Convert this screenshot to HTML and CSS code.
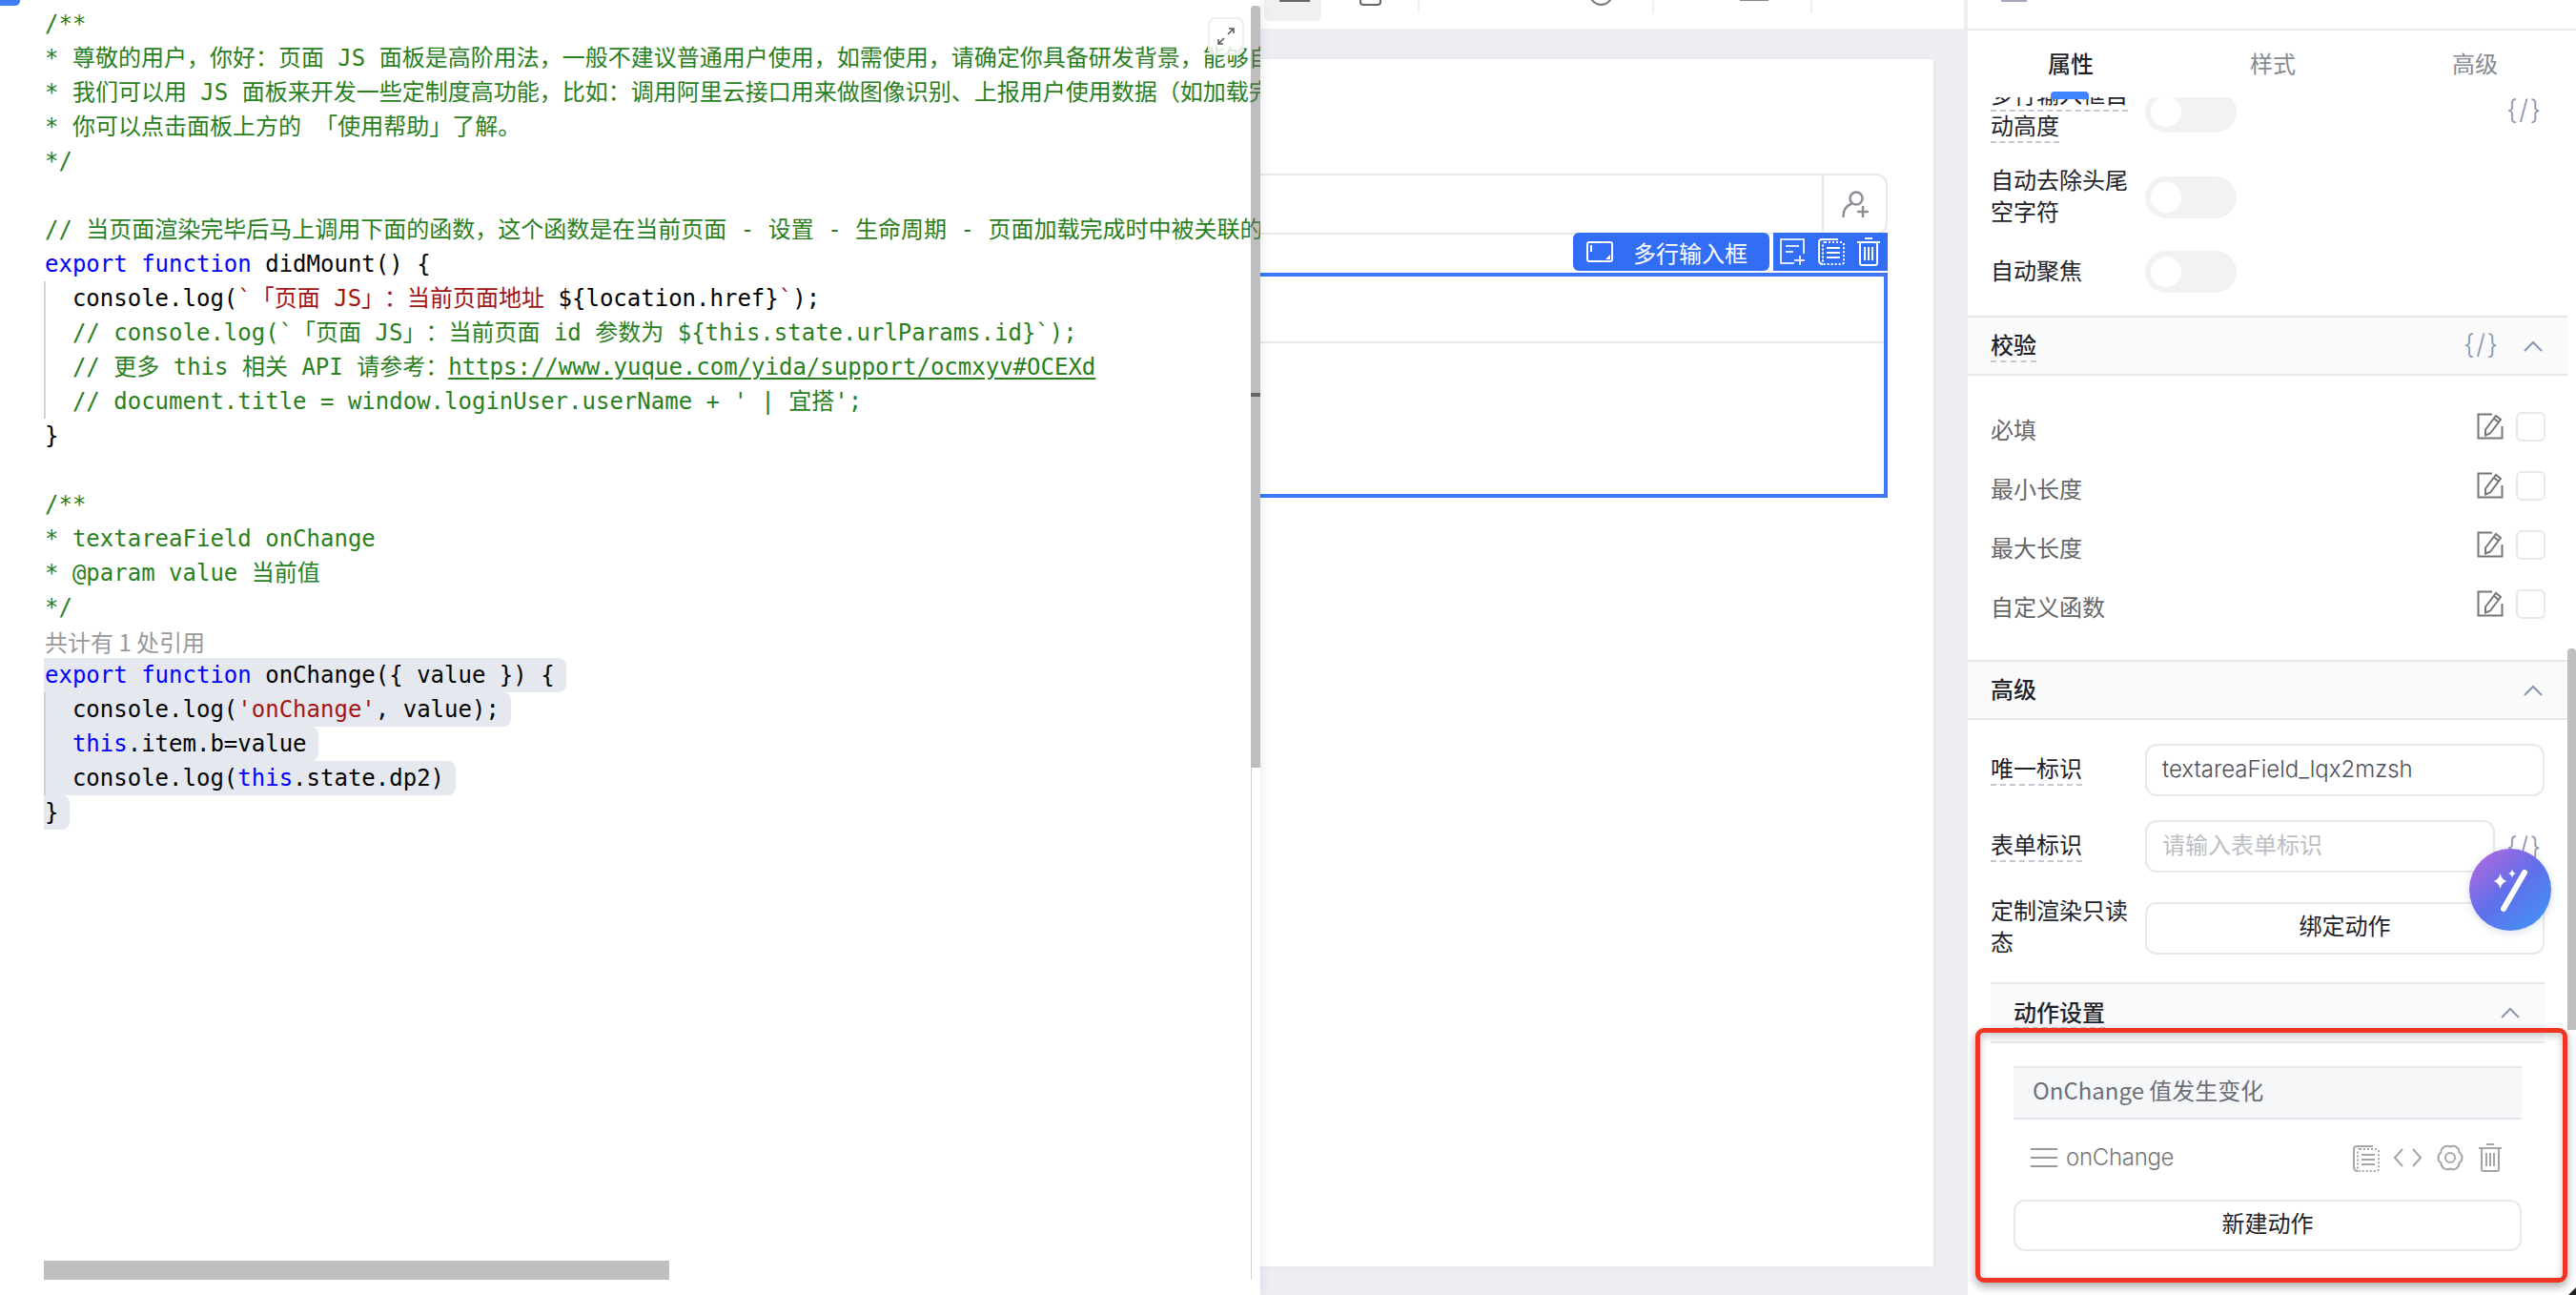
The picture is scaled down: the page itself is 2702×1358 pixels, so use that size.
FILE: index.html
```html
<!DOCTYPE html>
<html lang="zh-CN">
<head>
<meta charset="utf-8">
<title>页面 JS</title>
<link rel="stylesheet" href="styles.css">
</head>
<body>
<div class="app">
  <div class="center">
    <div class="topbar">
      <div class="top-tab"><span class="top-tab-mark"></span></div>
      <span class="top-icon"></span>
      <span class="top-sep top-sep-a"></span>
      <span class="top-ring"></span>
      <span class="top-sep top-sep-b"></span>
      <span class="top-line"></span>
      <span class="top-sep top-sep-c"></span>
    </div>
    <div class="canvas">
      <div class="card">
        <div class="user-field">
          <div class="user-main"></div>
          <div class="user-btn">
            <svg width="28" height="28" viewBox="0 0 28 28" fill="none" stroke="#8b8f96" stroke-width="2.500" stroke-linecap="round"><circle cx="15" cy="8" r="6.500"/><path d="M1.500 27c0-7 3-11 8-13"/><path d="M17 22h10M22 17v10"/></svg>
          </div>
        </div>
        <div class="selected">
          <div class="sel-head"></div>
          <div class="sel-body"></div>
          <div class="sel-tools">
            <div class="sel-label">
              <svg width="28" height="22" viewBox="0 0 28 22" fill="none" stroke="#fff" stroke-width="2"><rect x="1" y="1" width="26" height="20" rx="2"/><path d="M5 4v7"/><path d="M25 14v5h-5z" fill="#fff" stroke="none"/></svg>
              <span>多行输入框</span>
            </div>
            <div class="sel-actions">
              <svg width="28" height="30" viewBox="0 0 28 30" fill="none" stroke="#dfe8ff" stroke-width="2"><path d="M16 27H2V2h24v15"/><path d="M7 9h14M7 15h8M22 19v10M16 24h11"/></svg>
              <svg width="28" height="30" viewBox="0 0 28 30" fill="none" stroke="#fff" stroke-width="2"><path d="M5 28c-3 0-4-1-4-4V5c0-2 1-3 3-3h17"/><rect x="5" y="5" width="22" height="23" rx="2" stroke-dasharray="2 2"/><path d="M9 11h14M9 16h14M9 21h14"/></svg>
              <svg width="24" height="30" viewBox="0 0 24 30" fill="none" stroke="#fff" stroke-width="2"><path d="M0 5h24M8 1h8"/><rect x="3" y="5" width="18" height="24" rx="2"/><path d="M8 10v14M12 10v14M16 10v14"/></svg>
            </div>
          </div>
        </div>
      </div>
    </div>
  </div>

  <aside class="panel">
    <div class="crumbs">
      <span class="crumb-icon"></span>
      <span class="crumb">页面内容</span><span class="crumb-sep">/</span>
      <span class="crumb">容器</span><span class="crumb-sep">/</span>
      <span class="crumb">多行输入框</span>
    </div>
    <div class="tabs">
      <div class="tab tab-active">属性<span class="tab-bar"></span></div>
      <div class="tab">样式</div>
      <div class="tab">高级</div>
    </div>
    <div class="scroll">
      <div class="props">
        <div class="prop-row">
          <div class="label"><span class="dashed">多行输入框自动高度</span></div>
          <span class="toggle"><span class="knob"></span></span>
          <span class="bind bind-end">{/}</span>
        </div>
        <div class="prop-row">
          <div class="label">自动去除头尾空字符</div>
          <span class="toggle"><span class="knob"></span></span>
        </div>
        <div class="prop-row">
          <div class="label">自动聚焦</div>
          <span class="toggle"><span class="knob"></span></span>
        </div>
      </div>

      <div class="sec-head">
        <span class="sec-title dashed">校验</span>
        <span class="bind bind-head">{/}</span>
        <svg class="chev" width="20" height="12" viewBox="0 0 20 12" fill="none" stroke="#8a96b0" stroke-width="2"><path d="M1 11l9-9 9 9"/></svg>
      </div>
      <div class="checks">
        <div class="check-row"><span class="check-name">必填</span><svg class="edit" width="28" height="28" viewBox="0 0 28 28" fill="none" stroke="#777" stroke-width="2"><path d="M16 1.500H1.500v25h25V14"/><path d="M9 17.500L20 3l5 4-11 14.500-5 2z"/><path d="M18 6l5 4"/></svg><span class="checkbox"></span></div>
        <div class="check-row"><span class="check-name">最小长度</span><svg class="edit" width="28" height="28" viewBox="0 0 28 28" fill="none" stroke="#777" stroke-width="2"><path d="M16 1.500H1.500v25h25V14"/><path d="M9 17.500L20 3l5 4-11 14.500-5 2z"/><path d="M18 6l5 4"/></svg><span class="checkbox"></span></div>
        <div class="check-row"><span class="check-name">最大长度</span><svg class="edit" width="28" height="28" viewBox="0 0 28 28" fill="none" stroke="#777" stroke-width="2"><path d="M16 1.500H1.500v25h25V14"/><path d="M9 17.500L20 3l5 4-11 14.500-5 2z"/><path d="M18 6l5 4"/></svg><span class="checkbox"></span></div>
        <div class="check-row"><span class="check-name">自定义函数</span><svg class="edit" width="28" height="28" viewBox="0 0 28 28" fill="none" stroke="#777" stroke-width="2"><path d="M16 1.500H1.500v25h25V14"/><path d="M9 17.500L20 3l5 4-11 14.500-5 2z"/><path d="M18 6l5 4"/></svg><span class="checkbox"></span></div>
      </div>

      <div class="sec-head">
        <span class="sec-title">高级</span>
        <svg class="chev" width="20" height="12" viewBox="0 0 20 12" fill="none" stroke="#8a96b0" stroke-width="2"><path d="M1 11l9-9 9 9"/></svg>
      </div>
      <div class="adv">
        <div class="adv-row">
          <div class="label"><span class="dashed">唯一标识</span></div>
          <div class="input input-value">textareaField_lqx2mzsh</div>
        </div>
        <div class="adv-row">
          <div class="label"><span class="dashed">表单标识</span></div>
          <div class="input input-holder">请输入表单标识</div>
          <span class="bind bind-side">{/}</span>
        </div>
        <div class="adv-row">
          <div class="label">定制渲染只读态</div>
          <div class="input btn-like">绑定动作</div>
        </div>
      </div>

      <div class="sub-sec">
        <div class="sub-head">
          <span class="sec-title dashed">动作设置</span>
          <svg class="chev" width="20" height="12" viewBox="0 0 20 12" fill="none" stroke="#8a96b0" stroke-width="2"><path d="M1 11l9-9 9 9"/></svg>
        </div>
        <div class="sub-body">
          <div class="event-head">OnChange 值发生变化</div>
          <div class="event-row">
            <svg class="event-menu" width="28" height="20" viewBox="0 0 28 20" fill="none" stroke="#999" stroke-width="2"><path d="M0 1h28M0 10h28M0 19h28"/></svg>
            <span class="event-name">onChange</span>
            <span class="event-tools">
              <svg width="28" height="29" viewBox="0 0 28 29" fill="none" stroke="#a6a6a6" stroke-width="2"><path d="M5 28c-3 0-4-1-4-4V5c0-2 1-3 3-3h17"/><rect x="5" y="5" width="22" height="23" rx="2" stroke-dasharray="2 2"/><path d="M9 11h14M9 16h14M9 21h14"/></svg>
              <svg width="29" height="24" viewBox="0 0 29 24" fill="none" stroke="#a6a6a6" stroke-width="2"><path d="M9 3l-8 9 8 9M20 3l8 9-8 9"/></svg>
              <svg width="30" height="30" viewBox="0 0 30 30" fill="none" stroke="#a6a6a6" stroke-width="2" stroke-linejoin="round"><path d="M15 3.500A6.500 6.500 0 0 1 24.500 9.500A6.500 6.500 0 0 1 24.500 20.500A6.500 6.500 0 0 1 15 26.500A6.500 6.500 0 0 1 5.500 20.500A6.500 6.500 0 0 1 5.500 9.500A6.500 6.500 0 0 1 15 3.500Z"/><circle cx="15" cy="15" r="5"/></svg>
              <svg width="24" height="30" viewBox="0 0 24 30" fill="none" stroke="#a6a6a6" stroke-width="2"><path d="M0 5h24M8 1h8"/><rect x="3" y="5" width="18" height="24" rx="2"/><path d="M8 10v14M12 10v14M16 10v14"/></svg>
            </span>
          </div>
          <div class="new-action">新建动作</div>
        </div>
      </div>
      <span class="scroll-thumb"></span>
    </div>
    <div class="fab">
      <svg width="86" height="86" viewBox="0 0 86 86" fill="#fff"><path d="M58 25L36 63" stroke="#fff" stroke-width="6" stroke-linecap="round"/><path d="M32.500 26q1.500 6.500 7 8-5.500 1.500-7 8-1.500-6.500-7-8 5.500-1.500 7-8z"/><path d="M45 21.500q.8 3.700 4 4.500-3.200.8-4 4.500-.8-3.700-4-4.500 3.200-.8 4-4.500z"/></svg>
    </div>
    <div class="annotation"></div>
    <span class="corner"></span>
  </aside>

  <section class="code-panel">
    <span class="corner-tab"></span>
    <div class="code">
      <div class="line c">/**</div>
      <div class="line c">* 尊敬的用户，你好：页面 JS 面板是高阶用法，一般不建议普通用户使用，如需使用，请确定你具备研发背景，能够自主排查问题</div>
      <div class="line c">* 我们可以用 JS 面板来开发一些定制度高功能，比如：调用阿里云接口用来做图像识别、上报用户使用数据（如加载完成打点）等等</div>
      <div class="line c">* 你可以点击面板上方的 「使用帮助」了解。</div>
      <div class="line c">*/</div>
      <div class="line"></div>
      <div class="line c">// 当页面渲染完毕后马上调用下面的函数，这个函数是在当前页面 - 设置 - 生命周期 - 页面加载完成时中被关联的。</div>
      <div class="line"><span class="k">export function</span> didMount() {</div>
      <div class="line guide">  console.log(<span class="s">`「页面 JS」：当前页面地址 </span>${location.href}<span class="s">`</span>);</div>
      <div class="line guide c">  // console.log(`「页面 JS」：当前页面 id 参数为 ${this.state.urlParams.id}`);</div>
      <div class="line guide c">  // 更多 this 相关 API 请参考：<span class="link">https://www.yuque.com/yida/support/ocmxyv#OCEXd</span></div>
      <div class="line guide c">  // document.title = window.loginUser.userName + ' | 宜搭';</div>
      <div class="line">}</div>
      <div class="line"></div>
      <div class="line c">/**</div>
      <div class="line c">* textareaField onChange</div>
      <div class="line c">* @param value 当前值</div>
      <div class="line c">*/</div>
      <div class="lens">共计有 1 处引用</div>
      <div class="line-hl"><span class="hl"><span class="k">export function</span> onChange({ value }) {</span></div>
      <div class="line-hl"><span class="hl hl-guide">  console.log(<span class="s">'onChange'</span>, value);</span></div>
      <div class="line-hl"><span class="hl hl-guide">  <span class="k">this</span>.item.b=value</span></div>
      <div class="line-hl"><span class="hl hl-guide">  console.log(<span class="k">this</span>.state.dp2)</span></div>
      <div class="line-hl"><span class="hl">}</span></div>
    </div>
    <button class="expand" type="button" aria-label="展开">
      <svg width="20" height="20" viewBox="0 0 20 20" fill="none" stroke="#555" stroke-width="1.500"><path d="M12 8l6-6M13 2h5v5M8 12l-6 6M2 13v5h5"/></svg>
    </button>
    <span class="vbar-line"></span>
    <span class="vbar"></span>
    <span class="vbar-mark"></span>
    <span class="hbar"></span>
  </section>
</div>
</body>
</html>
```
FILE: styles.css
```css
* { box-sizing: border-box; }
html, body { margin: 0; padding: 0; }
body {
  width: 2702px;
  height: 1358px;
  overflow: hidden;
  background: #eceef2;
  font-family: "Noto Sans CJK SC", "Inter", sans-serif;
  font-size: 24px;
  color: #1f2329;
}
.app { position: relative; display: flex; gap: 4px; width: 2702px; height: 1358px; }

/* centre column */
.center { width: 2060px; display: flex; flex-direction: column; }
.topbar { position: relative; height: 30px; background: #fff; flex: none; overflow: hidden; }
.top-tab { position: absolute; left: 1326px; top: 0; width: 60px; height: 22px; background: #eff0f2; border-radius: 0 0 6px 6px; }
.top-tab-mark { display: block; width: 32px; height: 2px; margin-left: 16px; background: #666; }
.top-icon { position: absolute; left: 1426px; top: -10px; width: 23px; height: 16px; border: 2px solid #666; border-radius: 4px; }
.top-ring { position: absolute; left: 1667px; top: -19px; width: 25px; height: 25px; border: 2px solid #777; border-radius: 50%; }
.top-line { position: absolute; left: 1825px; top: 0; width: 30px; height: 1px; background: #888; }
.top-sep { position: absolute; top: 0; width: 2px; height: 14px; background: #eeeff2; }
.top-sep-a { left: 1487px; }
.top-sep-b { left: 1733px; }
.top-sep-c { left: 1899px; }

.canvas { flex: 1; padding: 32px 32px 30px 1200px; min-height: 0; }
.card { height: 100%; background: #fff; padding: 120px 48px 0; box-shadow: 0 0 4px rgba(40, 50, 80, .06); }
.user-field { display: flex; height: 64px; border: 2px solid #e8e8e8; border-radius: 0 12px 12px 0; }
.user-main { flex: 1; }
.user-btn { width: 67px; display: flex; align-items: center; justify-content: center; border-left: 2px solid #e8e8e8; }

.selected { position: relative; margin-top: 40px; height: 236px; border: 4px solid #3f76f5; }
.sel-head { height: 70px; border-bottom: 2px solid #e8e8e8; }
.sel-tools { position: absolute; top: -46px; right: -4px; display: flex; gap: 4px; height: 40px; color: #fff; }
.sel-label { width: 206px; display: flex; align-items: center; gap: 21px; padding-left: 14px; background: #316df5; border-radius: 6px; }
.sel-actions { width: 120px; display: flex; align-items: center; gap: 13px; padding-left: 6px; background: #316df5; }

/* right panel */
.panel { position: relative; width: 638px; height: 1358px; background: #fff; display: flex; flex-direction: column; overflow: hidden; }
.crumbs { height: 32px; flex: none; display: flex; align-items: flex-start; padding-left: 35px; border-bottom: 2px solid #e9e9ee; overflow: hidden; color: #555; line-height: 34px; }
.crumb-icon { width: 27px; height: 2px; background: #a5a9bb; margin-right: 13px; }
.crumb { margin-top: -32px; }
.crumb-sep { margin: -32px 26px 0; color: #aaa; }
.tabs { position: relative; z-index: 2; height: 70px; flex: none; display: grid; grid-template-columns: repeat(3, 1fr); padding-left: 2px; background: #fff; }
.tab { position: relative; text-align: center; line-height: 68px; color: #878a90; }
.tab-active { color: #1f2329; font-weight: 500; }
.tab-bar { position: absolute; left: 85px; top: 64px; width: 40px; height: 8px; background: #3f85ff; border-radius: 4px 4px 0 0; }

.scroll { position: relative; flex: 1; min-height: 0; overflow: hidden; padding-right: 9px; }
.scroll-thumb { position: absolute; right: 0; top: 578px; width: 9px; height: 400px; background: #bfbfbf; border-radius: 4px 4px 0 0; }

.props { display: flex; flex-direction: column; gap: 23.5px; margin-top: -18px; padding: 0 24px 24px; }
.prop-row { display: flex; align-items: center; min-height: 44px; }
.label { width: 144px; margin: -3px 18px 3px 0; flex: none; line-height: 33px; }
.dashed { text-decoration: underline dashed #c4c8d4 2px; text-underline-offset: 7px; }
.toggle { display: flex; align-items: center; width: 96px; height: 44px; padding-left: 6px; background: #f1f2f4; border-radius: 22px; }
.knob { width: 32px; height: 32px; background: #fff; border-radius: 50%; }
.bind { width: 35px; flex: none; color: #8a96b0; font-family: "Inter", sans-serif; font-weight: 300; font-size: 28px; letter-spacing: 1.5px; line-height: 28px; white-space: nowrap; }
.bind-end { margin: -2px 5px 2px auto; }
.bind-side { margin-left: 12px; margin-right: 5px; }
.bind-head { margin: -2px 28px 2px auto; }

.sec-head { display: flex; align-items: center; height: 63px; padding: 0 26px 0 24px; background: #fafafb; border-top: 2px solid #e6e7ec; border-bottom: 2px solid #e6e7ec; }
.sec-title { margin: -2px 0 2px; font-weight: 500; color: #1f2329; }
.sec-head .sec-title + .chev { margin-left: auto; }
.checks { padding: 25px 23px 25px 24px; }
.check-row { display: flex; align-items: center; height: 62px; color: #666; }
.check-name { flex: 1; margin: -1px 0 1px; }
.edit { margin-bottom: 6px; }
.checkbox { width: 31px; height: 31px; margin: 0 0 6px 13px; border: 2px solid #e6e8ee; border-radius: 6px; }

.adv { display: flex; flex-direction: column; gap: 25px; padding: 25px 24px 0; }
.adv-row { display: flex; align-items: center; }
.input { flex: 1; height: 55px; line-height: 46px; padding-left: 16px; border: 2px solid #e8e8e8; border-radius: 12px; }
.input-value { line-height: 50px; color: #4f525a; font-family: "Inter", "Noto Sans CJK SC", sans-serif; font-weight: 300; }
.input-holder { color: #bcbec4; }
.btn-like { padding-left: 0; line-height: 44px; text-align: center; color: #1f2329; }

.sub-sec { margin: 24px 24px 0; }
.sub-head { display: flex; align-items: center; justify-content: space-between; height: 64px; padding: 0 26px 0 24px; background: #fafafb; border-top: 2px solid #e6e7ec; border-bottom: 2px solid #e6e7ec; }
.sub-body { padding: 24px 24px 0; }
.event-head { height: 56px; line-height: 46px; padding-left: 20px; color: #6b6e75; background: #f6f7f9; border-top: 2px solid #e6e7ec; border-bottom: 2px solid #e6e7ec; }
.event-row { display: flex; align-items: center; height: 84px; padding: 0 21px 4px 18px; }
.event-menu { margin-right: 9px; }
.event-name { margin-bottom: 2px; color: #777; font-family: "Inter", sans-serif; font-weight: 300; letter-spacing: -.3px; }
.event-tools { display: flex; align-items: center; gap: 15px; margin-left: auto; }
.new-action { height: 54px; line-height: 44px; text-align: center; border: 2px solid #e8e8e8; border-radius: 12px; }

.fab { position: absolute; left: 526px; top: 890px; width: 86px; height: 86px; border-radius: 50%; background: linear-gradient(140deg, #bd66dd 0%, #5f70ea 50%, #3f98f6 100%); box-shadow: 0 2px 8px rgba(60, 80, 160, .2); }
.annotation { position: absolute; left: 8px; top: 1078px; width: 621px; height: 267px; border: 5px solid #ee3524; border-radius: 9px; box-shadow: 0 4px 10px rgba(0, 0, 0, .35), inset 0 3px 8px rgba(0, 0, 0, .22); }
.corner { position: absolute; right: 0; bottom: 0; width: 8px; height: 8px; background: #222; clip-path: polygon(100% 0, 100% 100%, 0 100%); }

/* code panel */
.code-panel { position: absolute; left: 0; top: 0; width: 1322px; height: 1358px; background: #fff; overflow: hidden; box-shadow: 0 0 10px rgba(40, 50, 90, .12); }
.corner-tab { position: absolute; left: 0; top: 0; width: 21px; height: 6px; background: #3f7ff5; border-radius: 0 0 5px 0; }
.code { padding: 7px 0 0 46px; font-family: "DejaVu Sans Mono", "Noto Sans CJK SC", monospace; font-size: 24px; color: #000; text-spacing-trim: space-all; }
.line { height: 36px; line-height: 36px; padding-left: 1px; white-space: pre; }
.c { color: #2a7f1e; }
.k { color: #0000ff; }
.s { color: #a31515; }
.link { text-decoration: underline; text-underline-offset: 3px; }
.guide { box-shadow: inset 2px 0 0 #d3d3d3; }
.lens { height: 35px; line-height: 35px; padding-left: 1px; color: #999; font-family: "Noto Sans CJK SC", sans-serif; }
.line-hl { height: 36px; line-height: 36px; white-space: pre; }
.hl { display: inline-block; height: 36px; padding: 0 12px 0 1px; background: #e5e9ef; border-radius: 0 8px 8px 0; vertical-align: top; }
.hl-guide { box-shadow: inset 2px 0 0 #cfd2d6; }
.expand { position: absolute; left: 1267px; top: 18px; width: 38px; height: 40px; padding: 0; display: flex; align-items: center; justify-content: center; background: rgba(255, 255, 255, .82); border: 2px solid #eeeeee; border-radius: 8px; }
.vbar-line { position: absolute; left: 1312px; top: 805px; width: 1px; height: 537px; background: #d0d0d0; }
.vbar { position: absolute; left: 1312px; top: 6px; width: 10px; height: 799px; background: rgba(110, 110, 110, .45); border-radius: 4px 4px 0 0; }
.vbar-mark { position: absolute; left: 1312px; top: 412px; width: 10px; height: 4px; background: #666; }
.hbar { position: absolute; left: 46px; top: 1322px; width: 656px; height: 20px; background: #bfbfbe; }
```
